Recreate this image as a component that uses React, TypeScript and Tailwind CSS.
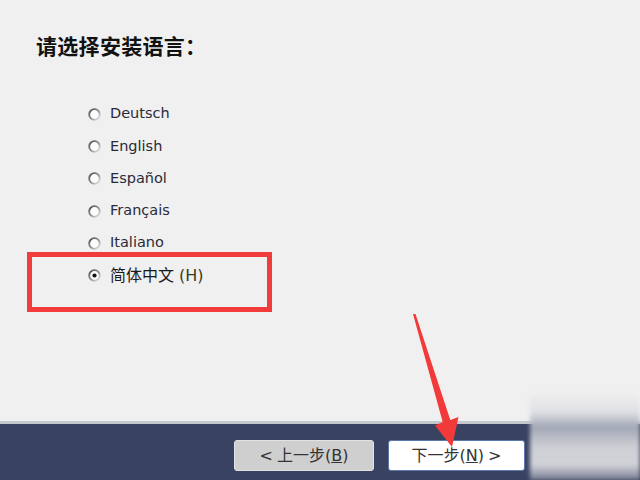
const options = ["Deutsch", "English", "Español", "Français", "Italiano"];

function Radio({ checked }: { checked?: boolean }) {
  return (
    <svg width="13" height="13" viewBox="0 0 13 13" className="shrink-0">
      <defs>
        <linearGradient id="ring" x1="0" y1="0" x2="1" y2="1">
          <stop offset="0" stopColor="#4a4a4a" />
          <stop offset="0.6" stopColor="#a0a0a0" />
          <stop offset="1" stopColor="#eeeeee" />
        </linearGradient>
      </defs>
      <circle cx="6.5" cy="6.5" r="5.3" fill="#fcfcfc" stroke="url(#ring)" strokeWidth="1.8" />
      {checked && <circle cx="6.5" cy="6.5" r="2.1" fill="#111" />}
    </svg>
  );
}

export default function App() {
  return (
    <div
      className="relative w-[640px] h-[480px] overflow-hidden bg-[#f0f0f0] text-[#222]"
      style={{ fontFamily: '"DejaVu Sans", "Noto Sans CJK SC", sans-serif' }}
    >
      <div className="h-[421px] pt-[33px] pl-[36px]">
        <h1 className="text-[21px] leading-[28px] font-bold text-[#111] tracking-[0.3px]">
          请选择安装语言：
        </h1>

        <div className="mt-[37px] pl-[88px] -ml-[36px] flex flex-col">
          {options.map((o) => (
            <label key={o} className="h-[32.3px] flex items-center gap-[9px] text-[14.5px] text-[#2a2a3a]">
              <Radio />
              <span>{o}</span>
            </label>
          ))}
          <label className="h-[32.3px] flex items-center gap-[9px] text-[16px] text-[#1a1a1a]">
            <Radio checked />
            <span>
              简体中文 <span className="text-[#3a3a20]">(H)</span>
            </span>
          </label>
        </div>
      </div>

      <div className="h-[3px] bg-[#c5c8cf]" />

      <div className="h-[56px] bg-[#394260] flex pl-[234px] pt-[16px] gap-[14px]">
        <button className="w-[140px] h-[31px] rounded-[3px] bg-[#cfcfcf] border border-[#e2e2e2] text-[16px] text-[#333] flex items-center justify-center gap-1">
          <span>&lt;</span>
          <span>
            上一步(<span className="underline">B</span>)
          </span>
        </button>
        <button className="w-[137px] h-[31px] rounded-[3px] bg-white border border-[#5b78a8] text-[16px] text-[#333] flex items-center justify-center gap-1">
          <span>
            下一步(<span className="underline">N</span>)
          </span>
          <span>&gt;</span>
        </button>
      </div>

      {/* blurred corner watermark */}
      <div className="absolute left-[530px] top-[395px] w-[110px] h-[85px] bg-[linear-gradient(180deg,#ececee_0%,#e0e1e4_20%,#a2a7b6_38%,#b9bcc6_50%,#cfd0d5_62%,#d2d3d8_82%,#767c92_100%)] blur-[2px]" />

      {/* red highlight box */}
      <div className="absolute left-[27px] top-[252px] w-[245px] h-[60px] border-[5px] border-[#f23c3c]" />

      {/* red arrow */}
      <svg className="absolute left-0 top-0 pointer-events-none" width="640" height="480">
        <polygon
          points="413,314 415.5,314 450.3,419.9 458.5,417 452,447 435,425.5 442.7,422.1"
          fill="#f23a3a"
        />
      </svg>
    </div>
  );
}
